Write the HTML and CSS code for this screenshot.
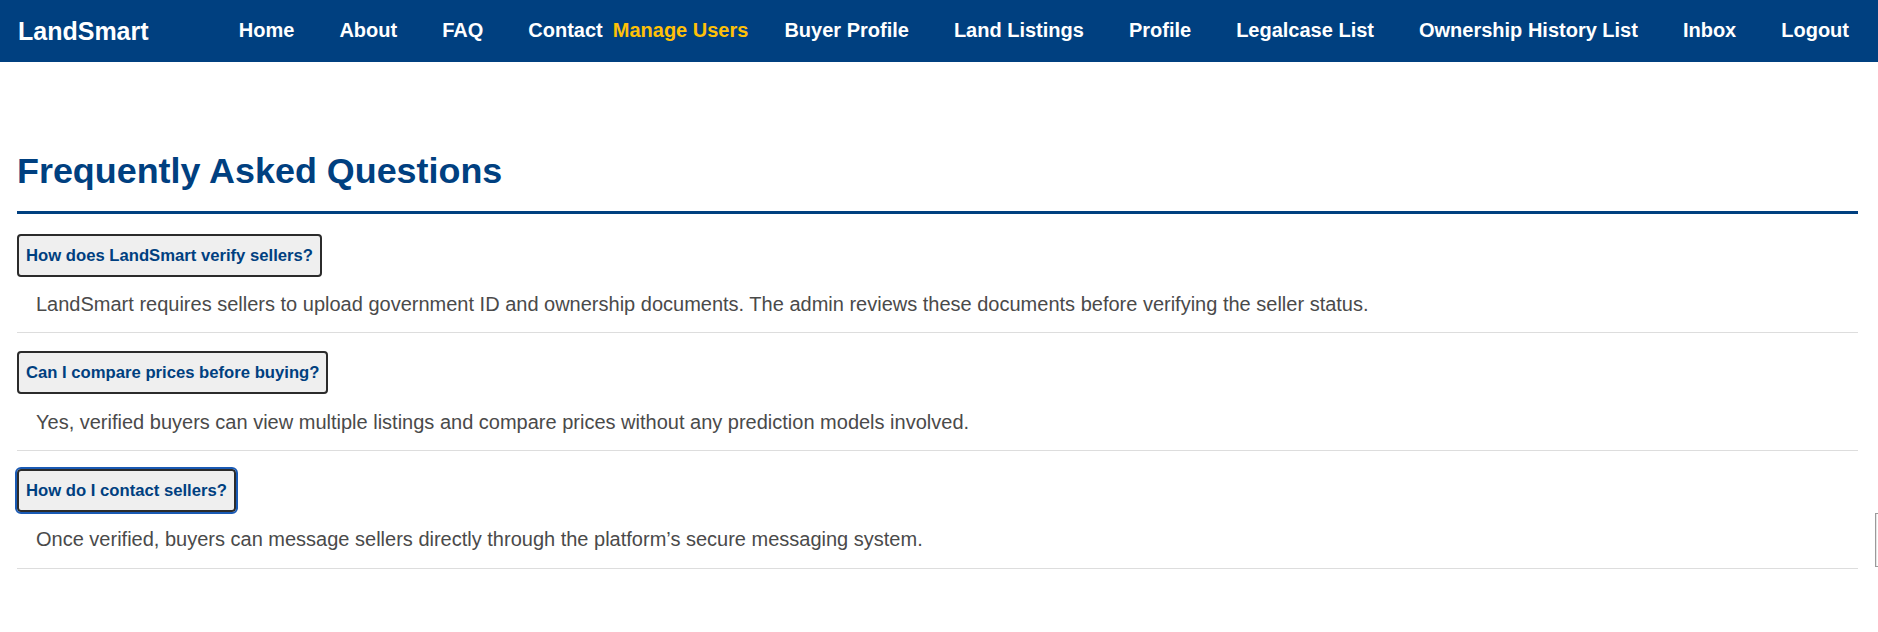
FILE: index.html
```html
<!DOCTYPE html>
<html lang="en">
<head>
<meta charset="utf-8">
<title>FAQ - LandSmart</title>
<link rel="stylesheet" href="styles.css">
</head>
<body>
<header class="navbar">
  <div class="logo">LandSmart</div>
  <nav class="nav-links">
    <a href="#" class="nav-link">Home</a>
    <a href="#" class="nav-link">About</a>
    <a href="#" class="nav-link">FAQ</a>
    <a href="#" class="nav-link">Contact</a>
    <a href="#" class="nav-link nav-admin">Manage Users</a>
    <a href="#" class="nav-link">Buyer Profile</a>
    <a href="#" class="nav-link">Land Listings</a>
    <a href="#" class="nav-link">Profile</a>
    <a href="#" class="nav-link">Legalcase List</a>
    <a href="#" class="nav-link">Ownership History List</a>
    <a href="#" class="nav-link">Inbox</a>
    <a href="#" class="nav-link">Logout</a>
  </nav>
</header>

<main class="container">
  <h1 class="page-title">Frequently Asked Questions</h1>

  <section class="faq-item">
    <button class="faq-question" type="button">How does LandSmart verify sellers?</button>
    <p class="faq-answer">LandSmart requires sellers to upload government ID and ownership documents. The admin reviews these documents before verifying the seller status.</p>
  </section>

  <section class="faq-item">
    <button class="faq-question" type="button">Can I compare prices before buying?</button>
    <p class="faq-answer">Yes, verified buyers can view multiple listings and compare prices without any prediction models involved.</p>
  </section>

  <section class="faq-item">
    <button class="faq-question is-focused" type="button">How do I contact sellers?</button>
    <p class="faq-answer">Once verified, buyers can message sellers directly through the platform’s secure messaging system.</p>
  </section>
</main>

<div class="edge-widget"></div>
</body>
</html>
```
FILE: styles.css
```css
html, body {
  margin: 0;
  padding: 0;
  background: #ffffff;
}

body {
  font-family: "Liberation Sans", Arial, Helvetica, sans-serif;
  color: #444444;
  position: relative;
  min-height: 632px;
}

.navbar {
  height: 62px;
  background: #004080;
  display: flex;
  align-items: center;
  justify-content: space-between;
  padding: 0 29px 0 18px;
  box-sizing: border-box;
}

.logo {
  color: #ffffff;
  font-weight: bold;
  font-size: 25px;
  line-height: 1.15;
}

.nav-links {
  display: flex;
  align-items: center;
  gap: 45px;
  margin-top: -2px;
}

.nav-link {
  color: #ffffff;
  text-decoration: none;
  font-weight: bold;
  font-size: 20px;
  line-height: 1.15;
  white-space: nowrap;
}

.nav-admin {
  color: #ffc107;
  margin-left: -35px;
  margin-right: -9px;
}

.container {
  width: 1841px;
  margin: 0 20px 0 17px;
  padding-top: 89px;
  box-sizing: border-box;
}

.page-title {
  margin: 0 0 20px 0;
  font-size: 35.9px;
  line-height: 1.15;
  font-weight: bold;
  color: #004080;
  padding-bottom: 18.3px;
  border-bottom: 3px solid #004080;
}

.faq-item {
  border-bottom: 1px solid #dddddd;
  margin-bottom: 18.2px;
}

.faq-question {
  display: block;
  font-family: "Liberation Sans", Arial, Helvetica, sans-serif;
  font-size: 16.67px;
  font-weight: bold;
  line-height: 1.15;
  color: #004080;
  background: #efefef;
  border: 2px solid #2b2b2b;
  border-radius: 4px;
  padding: 10px 7px;
  margin: 0;
  cursor: pointer;
}

.faq-question.is-focused {
  outline: 2px solid #1a5ab4;
  outline-offset: 0;
}

.faq-answer {
  margin: 0;
  padding: 16.2px 0 16.2px 19px;
  font-size: 20px;
  line-height: 1.15;
  color: #4a4a4a;
}

.edge-widget {
  position: absolute;
  left: 1875px;
  top: 513px;
  width: 10px;
  height: 52px;
  border: 1px solid #9a9a9a;
  border-right: none;
  box-shadow: inset 1px 0 0 #e6e6e6;
  background: #ffffff;
}
```
